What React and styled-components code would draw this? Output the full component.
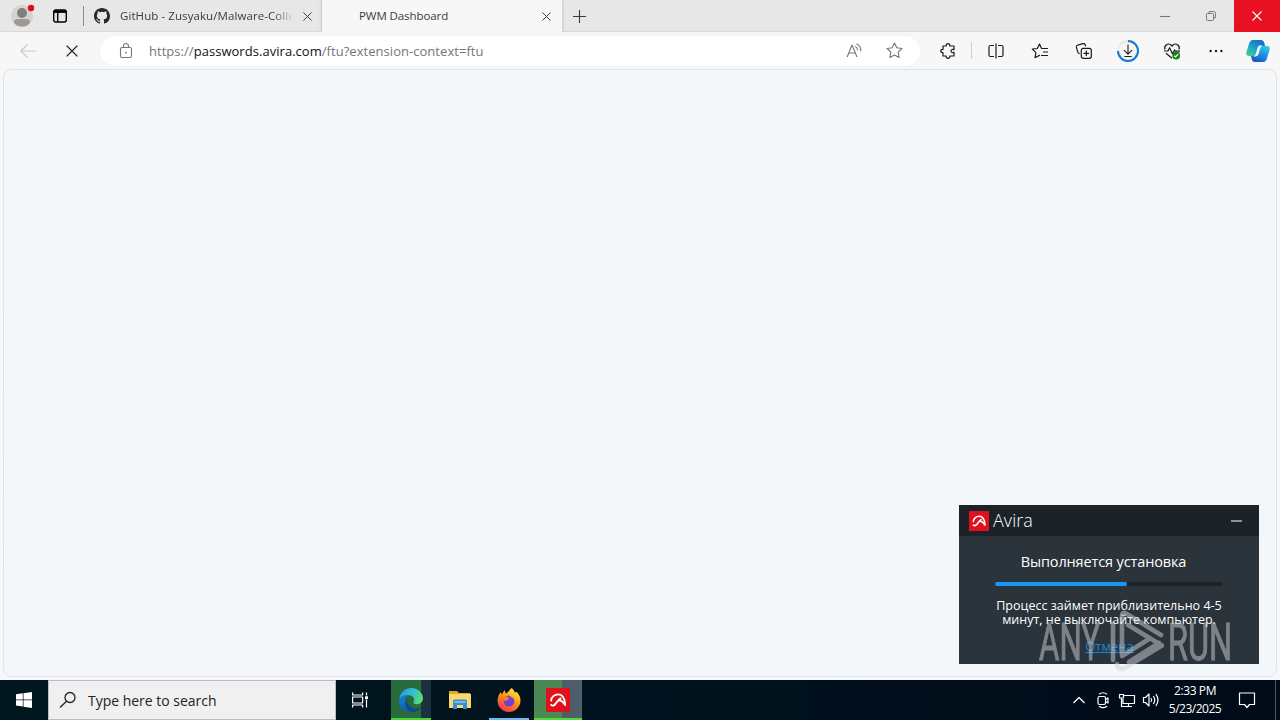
import React from "react";
import styled, { createGlobalStyle } from "styled-components";

const GlobalStyle = createGlobalStyle`
  * {
    box-sizing: border-box;
  }

  body {
    margin: 0;
    overflow: hidden;
    font-family: "Open Sans", "Noto Sans", sans-serif;
  }
`;

const Desktop = styled.div`
  position: relative;
  display: flex;
  flex-direction: column;
  width: 1280px;
  height: 720px;
  background: #f7f7f7;
`;

const Slot = styled.div`
  display: flex;
  flex: none;
  align-items: center;
  justify-content: center;
  width: ${({ $w }) => $w || 44}px;
  height: 100%;
  color: ${({ $color }) => $color || "inherit"};
`;

const Icon = styled.svg.attrs(({ $size = 20, viewBox }) => ({
  width: $size,
  height: $size,
  viewBox: viewBox || "0 0 20 20",
}))`
  flex: none;
  overflow: visible;
  fill: none;
  stroke: currentColor;
  stroke-width: ${({ $stroke }) => $stroke || 1.1};
  stroke-linejoin: round;
`;

const Label = styled.span`
  font-size: ${({ $size }) => $size}px;
  letter-spacing: ${({ $spacing }) => $spacing || 0}px;
  line-height: 1;
  white-space: pre;
`;

/* ---------- tab strip ---------- */

const TabStrip = styled.div`
  display: flex;
  flex: none;
  height: 32px;
  background: #e7e7e7;
  box-shadow: inset 0 -1px 0 #d9d9d9;
  color: #3b3b3b;
`;

const StripDivider = styled.div`
  width: 1px;
  height: 20px;
  margin: 6px 0 0 7px;
  background: #8d8d8d;
`;

const Tab = styled.div`
  display: flex;
  align-items: center;
  width: ${({ $w }) => $w}px;
  padding-left: ${({ $left }) => $left}px;
  background: ${({ $active }) => ($active ? "#f7f7f7" : "transparent")};
  box-shadow: ${({ $active }) => ($active ? "0 0 3px #aaa" : "none")};
  clip-path: inset(0 -4px 0 -4px);
`;

const TabTitle = styled(Label)`
  flex: 1;
  overflow: hidden;
  padding: 2px 0 3px;
  mask-image: ${({ $fade }) =>
    $fade ? "linear-gradient(90deg, #000 88%, transparent)" : "none"};
`;

const WindowButtons = styled.div`
  display: flex;
  margin-left: auto;
  color: #777;
`;

const CloseButton = styled(Slot)`
  background: #e81123;
  color: #fff;
`;

/* ---------- toolbar ---------- */

const Toolbar = styled.div`
  display: flex;
  flex: none;
  align-items: center;
  height: 37px;
  padding: 0 2px 0 6px;
  color: #1b1b1b;
`;

const AddressBar = styled.div`
  display: flex;
  flex: none;
  align-items: center;
  width: 820px;
  height: 30px;
  margin: 0 6px;
  padding: 0 6px 0 4px;
  border-radius: 15px;
  background: #fff;
  box-shadow: 0 0 2px #ececec;
  color: #767676;
`;

const Url = styled(Label)`
  flex: 1;
  padding: 1px 0 0 1px;

  b {
    color: #111;
    font-weight: 400;
  }
`;

const ToolDivider = styled.div`
  flex: none;
  width: 1px;
  height: 17px;
  margin: 0 2px 0 1px;
  background: #cfcfcf;
`;

/* ---------- page ---------- */

const Viewport = styled.div`
  flex: 1;
  padding: 0 3px 3px;
  background: linear-gradient(#f7f7f7, #f4f8fc);
`;

const Page = styled.div`
  height: 100%;
  border: 1px solid #e2e2e4;
  border-radius: 8px;
  background: #f4f7fa;
`;

/* ---------- installer window ---------- */

const Installer = styled.div`
  position: absolute;
  top: 505px;
  left: 959px;
  width: 300px;
  height: 159px;
  background: #2b333b;
  color: #fff;
`;

const InstallerHeader = styled.div`
  display: flex;
  align-items: center;
  height: 31px;
  padding: 0 17px 0 10px;
  background: #1b2329;
`;

const Brand = styled(Label)`
  flex: 1;
  padding: 0 0 1px 4px;
  font-weight: 300;
`;

const Minimize = styled.div`
  width: 11px;
  height: 2px;
  background: #8d9297;
`;

const InstallerBody = styled.div`
  display: flex;
  flex-direction: column;
  align-items: center;
  padding: 19px 1px 0 0;
`;

const InstallerTitle = styled(Label)`
  padding-right: 10px;
`;

const Progress = styled.div`
  width: 227px;
  height: 4px;
  margin: 12px 0 13px;
  border-radius: 2px;
  background: #1b2328;
`;

const ProgressFill = styled.div`
  height: 100%;
  border-radius: 2px;
  background: #1b98f5;
`;

const Notice = styled(Label)`
  height: 14px;
  padding-left: 1px;
  line-height: 14px;
  font-weight: 500;
`;

const Cancel = styled(Label)`
  margin-top: 13px;
  padding-left: 2px;
  color: #1788d8;
  text-decoration: underline;
`;

const Watermark = styled.svg`
  position: absolute;
  top: 600px;
  left: 1030px;
  opacity: 0.5;
`;

/* ---------- taskbar ---------- */

const Taskbar = styled.div`
  display: flex;
  flex: none;
  height: 40px;
  background: linear-gradient(90deg, #001720, #00121d 50%, #000a18);
  color: #fff;
`;

const SearchBox = styled.div`
  display: flex;
  align-items: center;
  width: 288px;
  padding-left: 10px;
  border: 1px solid #bdbdbd;
  background: #f0f0f0;
  color: #222;

  span {
    padding: 2px 0 0 11px;
  }
`;

const TaskButton = styled.div`
  display: flex;
  align-items: center;
  justify-content: center;
  width: ${({ $w }) => $w || 40}px;
  margin-left: ${({ $gap }) => $gap}px;
  background: ${({ $bg }) => $bg || "none"};
  box-shadow: ${({ $line }) => ($line ? `inset 0 -2px 0 ${$line}` : "none")};
`;

const Tray = styled.div`
  display: flex;
  margin-left: auto;
`;

const Clock = styled.div`
  display: flex;
  flex-direction: column;
  align-items: center;
  justify-content: center;
  gap: 6px;
  width: 64px;
`;

const ShowDesktop = styled.div`
  width: 5px;
  margin-left: 8px;
  border-left: 1px solid #4c5560;
`;

const CloseIcon = ({ size = 9 }) => (
  <Icon $size={size} viewBox="0 0 10 10" $stroke={1.1}>
    <path d="M.5.5l9 9M9.5.5l-9 9" />
  </Icon>
);

const AviraLogo = ({ size }) => (
  <Icon $size={size} viewBox="0 0 24 24" $stroke={1.9}>
    <path d="M0 0h24v24H0z" fill="#e2101c" stroke="none" />
    <path
      d="M5.200 12.500C5.200 9 8.500 6.400 12.200 6.400c4.300 0 6.600 3.100 7 10.600-1.300-2.500-3.600-4.500-6.400-5.200M14.600 10.400c-2.300 1.600-3.900 4-5.700 6.200-1 1.200-2.700 1.300-3.700.3"
      stroke="#fff"
      strokeLinecap="round"
    />
  </Icon>
);

const BrowserTabs = () => (
  <TabStrip>
    <Slot>
      <Icon $size={26} viewBox="0 0 26 26" stroke="none">
        <g stroke="none">
          <circle cx="13" cy="13" r="11" fill="#d5d3d1" />
          <circle cx="13" cy="10" r="5" fill="#817e7c" />
          <path d="M5 19.5q0-3.5 3.2-3.5h9.6q3.2 0 3.2 3.5c-1.5 2.4-4.5 4-8 4s-6.500-1.600-8-4z" fill="#9c9997" />
          <circle cx="22" cy="5" r="3.200" fill="#e00b1c" />
        </g>
      </Icon>
    </Slot>
    <Slot $w={32} $color="#000">
      <Icon $size={14} viewBox="0 0 14 14" $stroke={1.4}>
        <rect x=".7" y="1" width="12.600" height="12" rx="2" />
        <path d="M1 2.600h12" strokeWidth="2.600" />
        <path d="M4.700 3v10" />
      </Icon>
    </Slot>
    <StripDivider />
    <Tab $w={237} $left={10}>
      <Icon $size={16} viewBox="0 0 16 16">
        <path
          stroke="none"
          fill="#25292e"
          d="M8 0C3.580 0 0 3.580 0 8c0 3.540 2.290 6.530 5.470 7.590.4.070.55-.17.55-.38 0-.19-.01-.82-.01-1.490-2.010.37-2.530-.49-2.690-.94-.09-.23-.48-.94-.82-1.130-.28-.15-.68-.52-.01-.53.63-.01 1.080.58 1.230.82.72 1.210 1.870.87 2.330.66.07-.52.28-.87.51-1.070-1.780-.2-3.640-.89-3.640-3.950 0-.87.31-1.590.82-2.150-.08-.2-.36-1.020.08-2.120 0 0 .67-.21 2.200.82a7.600 7.600 0 0 1 4 0c1.530-1.040 2.200-.82 2.200-.82.44 1.100.16 1.920.08 2.120.51.56.82 1.270.82 2.150 0 3.070-1.870 3.750-3.650 3.950.29.25.54.73.54 1.480 0 1.070-.01 1.930-.01 2.200 0 .21.15.46.55.38A8.010 8.010 0 0 0 16 8c0-4.420-3.580-8-8-8z"
        />
      </Icon>
      <Slot $w={10} />
      <TabTitle $size={11.5} $spacing={0.08} $fade>
        GitHub - Zusyaku/Malware-Colle
      </TabTitle>
      <Slot $w={27}>
        <CloseIcon />
      </Slot>
    </Tab>
    <Slot $w={1} />
    <Tab $w={240} $left={37} $active>
      <TabTitle $size={11.5} $spacing={-0.08}>
        PWM Dashboard
      </TabTitle>
      <Slot $w={32}>
        <CloseIcon />
      </Slot>
    </Tab>
    <Slot $w={35}>
      <Icon $size={13} viewBox="0 0 13 13">
        <path d="M6.500 0v13M0 6.500h13" />
      </Icon>
    </Slot>
    <WindowButtons>
      <Slot $w={46}>
        <Icon $size={10} viewBox="0 0 10 10">
          <path d="M0 5.500h10" />
        </Icon>
      </Slot>
      <Slot $w={46}>
        <Icon $size={10} viewBox="0 0 10 10" $stroke={1}>
          <rect x=".5" y="2.500" width="7" height="7" rx="1" />
          <path d="M2.500 2.500Q2.500.5 4 .5h3.500q2 0 2 2V6q0 1.500-2 1.500" />
        </Icon>
      </Slot>
      <CloseButton $w={46} $color="#fff">
        <CloseIcon size={10} />
      </CloseButton>
    </WindowButtons>
  </TabStrip>
);

const BrowserToolbar = () => (
  <Toolbar>
    <Slot $color="#c9c9c9">
      <Icon $size={16} viewBox="0 0 16 16">
        <path d="M16 8H.8M7.500 1.500L.8 8l6.700 6.500" />
      </Icon>
    </Slot>
    <Slot>
      <CloseIcon size={12} />
    </Slot>
    <AddressBar>
      <Slot>
        <Icon $size={16} viewBox="0 0 16 16">
          <rect x="2.500" y="4.500" width="11" height="10" rx="1.500" />
          <path d="M5.500 4.500V3a2.500 2.500 0 0 1 5 0v1.500" />
          <circle cx="8" cy="9.700" r=".9" fill="currentColor" stroke="none" />
        </Icon>
      </Slot>
      <Url $size={13} $spacing={0.04}>
        https://<b>passwords.avira.com</b>/ftu?extension-context=ftu
      </Url>
      <Slot $w={40}>
        <Icon $size={16} viewBox="0 0 16 16">
          <path d="M1.200 14L6 2l5 12M2.600 10h6.700M9.300 3.200a5 5 0 0 1 2.300 4M10.500.8a7.500 7.500 0 0 1 4.200 7.500" />
        </Icon>
      </Slot>
      <Slot $w={40}>
        <Icon $size={17} viewBox="0 0 17 17">
          <path d="M8.500 1l2.300 4.800 5.200.7-3.800 3.700.9 5.300-4.600-2.500-4.600 2.500.9-5.300L1 6.500l5.200-.7z" />
        </Icon>
      </Slot>
    </AddressBar>
    <Slot>
      <Icon $size={16} viewBox="0 0 16 16" $stroke={1.2}>
        <path d="M3 3h3.200c-.2-1.300.5-2.300 1.800-2.300S10 1.700 9.800 3H14v3.600c-2.200-.5-3 .4-3 1.400s.8 1.900 3 1.400V13H9.800c.2 1.400-.5 2.300-1.800 2.300S6 14.400 6.200 13H3V9.600C1.600 9.600.8 9 .8 8S1.600 6.400 3 6.400z" />
      </Icon>
    </Slot>
    <ToolDivider />
    <Slot>
      <Icon $size={16} viewBox="0 0 16 16" $stroke={1.2}>
        <path d="M6 2.500H2.500q-1.500 0-1.500 1.500v8q0 1.500 1.500 1.500H6M10 2.500h3.500q1.500 0 1.500 1.500v8q0 1.500-1.500 1.500H10M8 .5v15" />
      </Icon>
    </Slot>
    <Slot>
      <Icon $size={16} viewBox="0 0 16 16" $stroke={1.2}>
        <path d="M9.500 5.500h6.500M11 9h5M9 12.500h7M9.500 5.500l-2-4.500-2.200 4.500-5 .6 3.600 3.500-.9 5.100 4.800-2.600M11 5.500h-1.500" />
      </Icon>
    </Slot>
    <Slot>
      <Icon $size={16} viewBox="0 0 16 16" $stroke={1.2}>
        <rect x="5.300" y="5.300" width="10" height="10" rx="2" />
        <path d="M10.300 7.500v5.600M7.500 10.300h5.600M3.600 10.700C2.400 10.500 2 9.800 1.700 8.800L.4 4.300Q0 2.700 1.600 2.200L7 .7q1.600-.4 2.200 1l.5 1.500" />
      </Icon>
    </Slot>
    <Slot>
      <Icon $size={22} viewBox="0 0 22 22" $stroke={1.1}>
        <circle cx="11" cy="11" r="10" stroke="#e8e8e8" strokeWidth="1.800" />
        <path d="M11 1a10 10 0 1 1-10 10" stroke="#1679ce" strokeWidth="2" />
        <path d="M11 4.500v9.500M7 10.200l4 4 4-4M7.300 16.500h7.400" />
      </Icon>
    </Slot>
    <Slot>
      <Icon $size={16} viewBox="0 0 16 16" $stroke={1.2}>
        <path d="M1 6.500C-.3 3 3.500-.7 7 2l1 1 1-1c3.500-2.700 7.300 1 6 4.500M0 8h4l1.600-3.200 2.800 6L10.500 7l1 1.200H16M2 10.200l6 5" />
        <circle cx="12.200" cy="12.500" r="3.900" fill="#178018" stroke="none" />
        <path d="M10.300 12.700l1.300 1.200 2.600-2.700" stroke="#fff" />
      </Icon>
    </Slot>
    <Slot>
      <Icon $size={14} viewBox="0 0 14 14">
        <g fill="currentColor" stroke="none">
          <circle cx="1.600" cy="7" r="1.200" />
          <circle cx="7" cy="7" r="1.200" />
          <circle cx="12.400" cy="7" r="1.200" />
        </g>
      </Icon>
    </Slot>
    <Slot $w={40}>
      <Icon $size={24} viewBox="0 0 24 24">
        <defs>
          <linearGradient id="copilotLeft" x1="0" y1="1" x2=".8" y2="0">
            <stop offset="0" stopColor="#4ed67c" />
            <stop offset=".45" stopColor="#1ca9cb" />
            <stop offset="1" stopColor="#1269c8" />
          </linearGradient>
          <linearGradient id="copilotRight" x1=".7" y1="0" x2=".2" y2="1">
            <stop offset="0" stopColor="#32c4ed" />
            <stop offset=".6" stopColor="#1c80e2" />
            <stop offset="1" stopColor="#1451bd" />
          </linearGradient>
        </defs>
        <g stroke="none">
          <path d="M7 1h8q2.500 0 3.200 2.500L19 7h-3q-2 0-2.700 2l-2 6q-.7 2-2.700 2H3q-3.500 0-2.600-4L3.300 4Q4.200 1 7 1z" fill="url(#copilotLeft)" />
          <path d="M17 23H9q-2.500 0-3.200-2.500L5 17h3q2 0 2.700-2l2-6q.7-2 2.700-2H21q3.500 0 2.600 4l-2.900 9q-.9 3-3.700 3z" fill="url(#copilotRight)" />
          <path d="M13 6.500h3.500q-1.700.8-2.300 3l-1.700 5.500q-.8 2.600-3 2.600H7.300q1.800-.5 2.400-2.500l1.700-5.600q.8-2.700 1.600-3z" fill="#f4faff" />
        </g>
      </Icon>
    </Slot>
  </Toolbar>
);

const InstallerWindow = () => (
  <Installer>
    <InstallerHeader>
      <AviraLogo size={20} />
      <Brand $size={18} $spacing={0.05}>
        Avira
      </Brand>
      <Minimize />
    </InstallerHeader>
    <InstallerBody>
      <InstallerTitle $size={14.5} $spacing={-0.13}>
        Выполняется установка
      </InstallerTitle>
      <Progress>
        <ProgressFill style={{ width: `${(132 / 227) * 100}%` }} />
      </Progress>
      <Notice $size={12.5} $spacing={0.02}>
        Процесс займет приблизительно 4-5
      </Notice>
      <Notice $size={12.5} $spacing={0}>
        минут, не выключайте компьютер.
      </Notice>
      <Cancel $size={13}>Отмена</Cancel>
    </InstallerBody>
  </Installer>
);

const AnyRunMark = () => (
  <Watermark width="210" height="80" viewBox="0 0 210 80">
    <g fill="#d0d3d6" stroke="#d0d3d6" strokeWidth="1" fontFamily="Roboto, sans-serif" fontSize="51">
      <text x="9" y="59.500" textLength="61" lengthAdjust="spacingAndGlyphs">
        ANY
      </text>
      <text x="138" y="59.500" textLength="64" lengthAdjust="spacingAndGlyphs">
        RUN
      </text>
    </g>
    <g fill="none" stroke="#d0d3d6" strokeWidth="4.600" strokeLinejoin="round" strokeLinecap="round">
      <path d="M83 24v36M131 35L96 13.500q-4-2-4 2V56l27-17" />
      <path d="M98 25l34 20.500L93 69q-6 0-6-5M99 62l30-19" />
    </g>
  </Watermark>
);

const WindowsTaskbar = () => (
  <Taskbar>
    <Slot $w={48}>
      <Icon $size={16} viewBox="0 0 16 16">
        <path
          stroke="none"
          fill="#fff"
          d="M0 2.300l6.800-1v6.200H0zM7.500 1.200L16 0v7.500H7.500zM0 8.300h6.800v6.300L0 13.600zM7.500 8.300H16V16l-8.500-1.300z"
        />
      </Icon>
    </Slot>
    <SearchBox>
      <Icon $size={18} viewBox="0 0 18 18" $stroke={1.3}>
        <circle cx="11" cy="6.500" r="5" />
        <path d="M7.500 10.200L1 16.500" />
      </Icon>
      <Label $size={14} $spacing={-0.02}>
        Type here to search
      </Label>
    </SearchBox>
    <Slot $w={48}>
      <Icon $size={16} viewBox="0 0 16 16" $stroke={1.2}>
        <path d="M.6.5v2.500h10V.5M.6 15.500V13h10v2.500M.6 5h10v6H.6zM14.500.5v3M14.500 8v7.500" />
        <path d="M13 4.300h3v3h-3z" fill="#fff" stroke="none" />
      </Icon>
    </Slot>
    <TaskButton $gap={7} $bg="linear-gradient(90deg, #286b3d 75%, #1c3140 75%)" $line="#4fd338">
      <Icon $size={24} viewBox="0 0 24 24">
        <defs>
          <linearGradient id="edgeTop" x1="0" y1=".2" x2="1" y2=".5">
            <stop offset="0" stopColor="#259fe0" />
            <stop offset=".55" stopColor="#30bfd1" />
            <stop offset="1" stopColor="#5bdc66" />
          </linearGradient>
          <linearGradient id="edgeLow" x1="0" y1="0" x2=".6" y2="1">
            <stop offset="0" stopColor="#1783d5" />
            <stop offset="1" stopColor="#1055ac" />
          </linearGradient>
        </defs>
        <g stroke="none">
          <path d="M.3 11C1.300 4 6.500 0 12.300 0 19.500 0 24 5.500 24 10.200c0 3.800-3 6-6 6-2.800 0-4.200-.9-3.500-1.900C16.500 11 14 7.500 10 7.200 5.500 7 2 8.800.3 11z" fill="url(#edgeTop)" />
          <path d="M.2 12C1.500 8 5.500 6.500 9 7.300c-3.500 2-4.500 7.500-1 11.700 3.200 3.700 9 4 13.500.4-2 3.200-5.700 4.600-9.500 4.600C4.800 24-.6 18.500.2 12z" fill="url(#edgeLow)" />
          <path d="M9.500 9.200c-2.800 3.300-1 9.300 4.500 11 3.700 1 6.500-.2 8-1.200-2 4-6 5-9 4.900C7 22.500 4 15 9.500 9.200z" fill="#13488d" />
        </g>
      </Icon>
    </TaskButton>
    <TaskButton $gap={9}>
      <Icon $size={22} viewBox="0 0 22 22">
        <g stroke="none">
          <path d="M0 2h8l2 2h11v15H0z" fill="#e5a72a" />
          <path d="M0 5h22v14H0z" fill="#fad870" />
          <path d="M4 20v-8q0-1.500 1.500-1.500h11Q18 10.500 18 12v8h-4v-4H8v4z" fill="#348fd1" />
          <path d="M5.500 12h11v2h-11z" fill="#75bde4" />
        </g>
      </Icon>
    </TaskButton>
    <TaskButton $gap={9} $line="#76b9ed">
      <Icon $size={24} viewBox="0 0 24 24">
        <defs>
          <linearGradient id="foxBody" x1=".8" y1="0" x2=".2" y2="1">
            <stop offset="0" stopColor="#fff044" />
            <stop offset=".45" stopColor="#ff980e" />
            <stop offset="1" stopColor="#f62858" />
          </linearGradient>
        </defs>
        <g stroke="none">
          <path d="M14.500 0c1.800 1.300 2.800 2.800 3.200 4.500l1.800-.8c3 3 4.200 6.300 4 9.500C23 19.200 18 24 12 24S.7 19.300.5 13C.4 9.500 2 6 3.800 4l1 2.500L7.500 2l1.300 3.500c2-.8 2.800-2.500 5.700-5.500z" fill="url(#foxBody)" />
          <circle cx="12" cy="13" r="5.500" fill="#7540cf" />
          <path d="M5.500 9.500c2.300-2.700 5-.7 7 .4-1 1.800-3 1.700-3.700 3.300-2-.5-3-1.800-3.300-3.700z" fill="#ff7a20" />
          <path d="M12 6c5-.5 7 3 6.500 7.300-1.500-3-3-4-4.600-4.300z" fill="#ffb62b" />
        </g>
      </Icon>
    </TaskButton>
    <TaskButton
      $gap={5}
      $w={48}
      $bg="linear-gradient(90deg, #4a8955 59%, #4b5e69 59%)"
      $line="#55d938"
    >
      <AviraLogo size={24} />
    </TaskButton>
    <Tray>
      <Slot $w={24}>
        <Icon $size={12} viewBox="0 0 12 12" $stroke={1.3}>
          <path d="M.5 9L6 3.500 11.500 9" />
        </Icon>
      </Slot>
      <Slot $w={24}>
        <Icon $size={16} viewBox="0 0 16 16" $stroke={1.2}>
          <rect x="3" y="4.500" width="7.500" height="8" rx="1.500" />
          <path d="M10.500 7.500L13 6v5l-2.500-1.500M4 2.300Q8-.8 12 2.300M4 14.200q4 3 8 0" />
        </Icon>
      </Slot>
      <Slot $w={24}>
        <Icon $size={16} viewBox="0 0 16 16" $stroke={1.2}>
          <path d="M5 3.500h10.500v8H4V7M9.500 11.500v3M6 14.500h7M.5 2.500h4V6h-4zM2.500 6v8.500H6" />
        </Icon>
      </Slot>
      <Slot $w={24}>
        <Icon $size={16} viewBox="0 0 16 16" $stroke={1.2}>
          <path d="M.5 5.500h2L6 2v12l-3.500-3.500h-2zM8 6q1.300 2 0 4M10.300 4q3 4 0 8M12.800 2.200q4.400 5.800 0 11.600" />
        </Icon>
      </Slot>
      <Clock>
        <Label $size={12} $spacing={-0.4}>
          2:33 PM
        </Label>
        <Label $size={12} $spacing={-0.5}>
          5/23/2025
        </Label>
      </Clock>
      <Slot $w={40}>
        <Icon $size={16} viewBox="0 0 16 16" $stroke={1.2}>
          <path d="M.5 1h15v11.500h-5L8 15.500l-2.500-3h-5z" />
        </Icon>
      </Slot>
      <ShowDesktop />
    </Tray>
  </Taskbar>
);

const App = () => {
  return (
    <>
      <GlobalStyle />
      <Desktop>
        <BrowserTabs />
        <BrowserToolbar />
        <Viewport>
          <Page />
        </Viewport>
        <WindowsTaskbar />
        <InstallerWindow />
        <AnyRunMark />
      </Desktop>
    </>
  );
};

export default App;
